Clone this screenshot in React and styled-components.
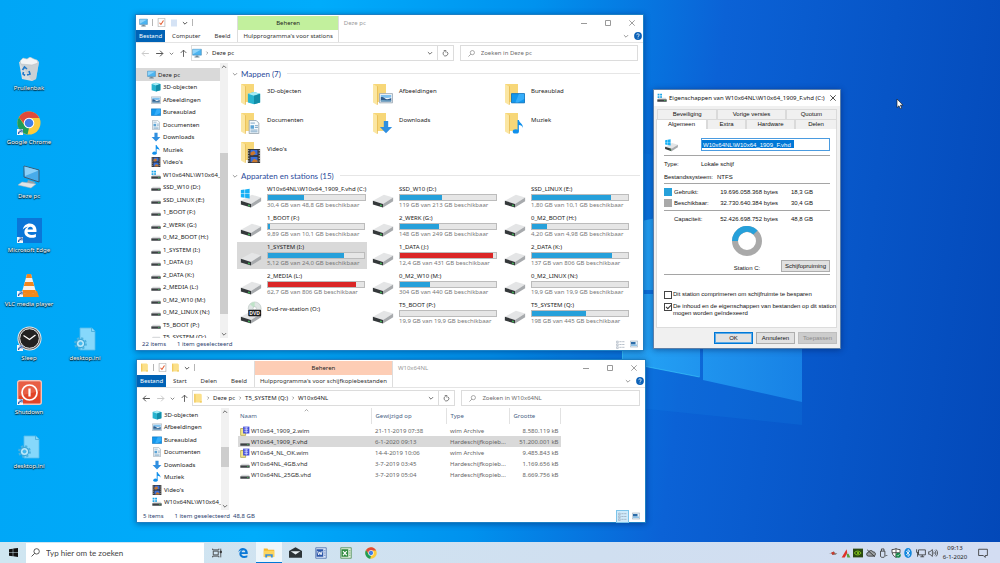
import React from "react";
import styled, { createGlobalStyle } from "styled-components";

const GlobalStyle = createGlobalStyle`
  * {
    box-sizing: border-box;
  }
  body {
    margin: 0;
    font-family: "Noto Sans", "Open Sans", sans-serif;
    font-size: 6px;
    line-height: 8px;
    color: #222;
  }
  button, input {
    font: inherit;
    color: inherit;
    margin: 0;
    padding: 0;
    border: 0;
    background: none;
    border-radius: 0;
  }
  a {
    color: inherit;
    text-decoration: none;
  }
  ul {
    list-style: none;
    margin: 0;
    padding: 0;
  }
  svg {
    display: block;
    flex: none;
  }
`;

/* ---------- icons ---------- */

const Icon = ({ w = 10, h, box = "0 0 16 16", children }) => (
  <svg width={w} height={h || w} viewBox={box} aria-hidden="true">
    {children}
  </svg>
);

const PcIcon = ({ w = 10 }) => (
  <Icon w={w}>
    <path d="M1 2h14v9.500H1z" fill="#4db4f0" stroke="#3b7ca8" strokeWidth=".8" />
    <path d="M1.500 2.500h13L1.500 10z" fill="#8fd4fa" />
    <path d="M6 12h4v1.500h2V15H4v-1.500h2z" fill="#6f8796" />
  </Icon>
);

const CubeIcon = ({ w = 10 }) => (
  <Icon w={w}>
    <path d="M8 1l7 2v10l-7 2-7-2V3z" fill="#28b4cf" />
    <path d="M8 1l7 2-7 2.500L1 3z" fill="#a6ecf5" />
    <path d="M8 5.500L15 3v10l-7 2z" fill="#128da8" />
  </Icon>
);

const PictureIcon = ({ w = 10 }) => (
  <Icon w={w}>
    <path d="M.5 3h15v10.500H.5z" fill="#f4f6f8" stroke="#9aa7b2" />
    <path d="M2 4.500h12v3L9 8 2 7z" fill="#7fc0ee" />
    <path d="M2 7c3-1 4 1 6 2s4 0 6-1v4H2z" fill="#2f5c8c" />
    <path d="M2 10.500c4-.5 8 .5 12 0V12H2z" fill="#6ea3c4" />
  </Icon>
);

const DesktopIcon = ({ w = 10 }) => (
  <Icon w={w}>
    <path d="M.5 3h15v10.500H.5z" fill="#1298ee" stroke="#0c70bb" />
    <path d="M9 3.500h6V9l-7 4H5z" fill="#36aefa" />
  </Icon>
);

const DocIcon = ({ w = 10 }) => (
  <Icon w={w}>
    <path d="M2.500.5h8l3 3v12h-11z" fill="#f7fafc" stroke="#97a5b0" />
    <path d="M4 6h4v4H4z" fill="#5ba3d4" />
    <path d="M9 6.500h3.500M9 8.500h3.500M4 11.500h8M4 13.500h8M4 3.500h5" stroke="#6f9dc0" />
  </Icon>
);

const DownIcon = ({ w = 10 }) => (
  <Icon w={w}>
    <path d="M5.500 1h5v7H15l-7 7-7-7h4.500z" fill="#2f8fe0" />
  </Icon>
);

const MusicIcon = ({ w = 10 }) => (
  <Icon w={w}>
    <ellipse cx="5.500" cy="13" rx="3.500" ry="2.500" fill="#1090ec" />
    <path d="M7.500 0H9c.5 3.500 5 4 4.500 9-.5-2-2-3-4.500-3.200V13H7.500z" fill="#1090ec" />
  </Icon>
);

const VideoIcon = ({ w = 10 }) => (
  <Icon w={w}>
    <path d="M1 0h14v16H1z" fill="#333" />
    <path d="M4 1h8v6H4z" fill="#3a6fd8" />
    <path d="M4 9h8v6H4z" fill="#3a6fd8" />
    <path d="M4 4l4-2 2 3-3 2H4zM5 15l3-4 4 2v2z" fill="#c9772c" />
    <path d="M2 1v14M14 1v14" stroke="#ddd" strokeDasharray="1.500 1.500" />
  </Icon>
);

const MiniDriveIcon = ({ win }) => (
  <Icon w={10}>
    {win && <path d="M1 1h3v3H1zM5 1h3v3H5zM1 5h3v3H1zM5 5h3v3H5z" fill="#19a5ea" />}
    <path d="M3 7.500h11l1.500 3H.5z" fill="#d9dbdd" />
    <path d="M.5 10.200h15V14H.5z" fill="#3d4144" />
    <path d="M11.500 11.500h2v1.200h-2z" fill="#45d562" />
  </Icon>
);

const DriveShape = () => (
  <>
    <path d="M1 17l12-6.500 10 3L12 20.500z" fill="#e4e5e6" />
    <path d="M1 17l11 3.500v4L1 21z" fill="#34383a" />
    <path d="M12 20.500l11-7v4.200l-11 6.800z" fill="#a7aaad" />
    <path d="M9 21.200l1.600.5v1.500L9 22.700z" fill="#46d35f" />
  </>
);

const WinFlag = () => (
  <path
    d="M1 1.500l4-.6v4.200H1zM5.600.800L10.500 0v5.100H5.600zM1 5.700h4v4.100l-4-.6zM5.600 5.700h4.900v5l-4.900-.8z"
    fill="#16b0f5"
  />
);

const DriveIcon = ({ kind, w = 24 }) => (
  <Icon w={w} box="0 0 24 26">
    <DriveShape />
    {kind === "win" && <g transform="translate(0 4)"><WinFlag /></g>}
    {kind === "dvd" && (
      <>
        <circle cx="16" cy="8" r="7" fill="#dfe5e4" stroke="#b6c2bd" strokeWidth=".6" />
        <path d="M16 8L11 3.500a7 7 0 0 1 5-2.300z" fill="#bfe3c8" />
        <circle cx="16" cy="8" r="1.800" fill="#fff" stroke="#a8b3b0" strokeWidth=".5" />
        <rect x="9" y="9.500" width="14" height="7" rx="1" fill="#191b1c" />
        <text x="16" y="15" fontSize="5.500" fontWeight="700" fill="#eee" textAnchor="middle">DVD</text>
      </>
    )}
  </Icon>
);

const FolderBack = () => (
  <>
    <path d="M1 1h13v18H4z" fill="#f7d778" />
    <path d="M1 1l4 2.500V22l-4-2.500z" fill="#fbe6a2" />
    <path d="M5 3.500l.8-.5v18.500L5 22z" fill="#e7bd55" />
  </>
);

const SmallFolder = ({ w = 9 }) => (
  <Icon w={w}>
    <path d="M2 1h10l2 1.500V15H2z" fill="#fbe08a" />
    <path d="M2 1l2 1.500V15H2zM11 13h3v2h-3z" fill="#f0c75a" />
  </Icon>
);

const SheetIcon = () => (
  <Icon w={9}>
    <path d="M2 .5h12v15H2z" fill="#fff" stroke="#9b9b9b" />
    <path d="M4.500 8.500l2.500 3 4.500-7" fill="none" stroke="#e2572b" strokeWidth="1.800" />
  </Icon>
);

const ArchiveIcon = () => (
  <Icon w={10}>
    <path d="M1 4h8v11H1z" fill="#f3e78f" stroke="#a08d2c" />
    <path d="M5 1h10v11H5z" fill="#3e49d8" />
    <path d="M7 3h6M7 6h6M7 9h6M10 2v9" stroke="#dfe2ff" strokeWidth="1.200" />
  </Icon>
);

const Chevron = ({ dir = "down", color = "#555", w = 6 }) => {
  const turn = { down: 0, up: 180, right: -90, left: 90 }[dir];
  return (
    <Icon w={w} box="0 0 10 10">
      <path
        d="M1.500 3.500L5 7l3.500-3.500"
        fill="none"
        stroke={color}
        strokeWidth="1.400"
        transform={`rotate(${turn} 5 5)`}
      />
    </Icon>
  );
};

const Arrow = ({ turn = 0, color = "#555" }) => (
  <Icon w={9}>
    <g transform={`rotate(${turn} 8 8)`} fill="none" stroke={color} strokeWidth="1.600">
      <path d="M2 8h12M7 3L2 8l5 5" />
    </g>
  </Icon>
);

const SearchIcon = ({ w = 7, color = "#777" }) => (
  <Icon w={w}>
    <circle cx="10" cy="6" r="4.800" fill="none" stroke={color} strokeWidth="1.400" />
    <path d="M6.500 9.500L1 15" stroke={color} strokeWidth="1.500" />
  </Icon>
);

const RefreshIcon = () => (
  <Icon w={7}>
    <path d="M12 4.500A5.500 5.500 0 1 1 6 3" fill="none" stroke="#555" strokeWidth="1.700" />
    <path d="M4 1h5v5" fill="none" stroke="#555" strokeWidth="1.700" />
  </Icon>
);

const HelpIcon = () => (
  <Icon w={8}>
    <circle cx="8" cy="8" r="7.800" fill="#0c62b8" />
    <path d="M5.500 6.200C5.500 2.800 10.500 3 10.500 6c0 1.800-2.500 2-2.500 3.800M8 11.300v1.700" fill="none" stroke="#fff" strokeWidth="1.600" />
  </Icon>
);

const MinIcon = () => <Icon w={6} box="0 0 6 6"><path d="M0 3.500h6" stroke="#999" /></Icon>;
const MaxIcon = () => <Icon w={6} box="0 0 6 6"><path d="M.5.500h5v5h-5z" fill="none" stroke="#999" /></Icon>;
const CloseIcon = ({ color = "#888" }) => (
  <Icon w={6} box="0 0 6 6"><path d="M.3.300l5.400 5.400M5.700.300L.3 5.700" stroke={color} strokeWidth=".8" /></Icon>
);

const ListViewIcon = () => (
  <Icon w={9}>
    <path d="M1 2h3v3H1zM1 7h3v3H1zM1 12h3v3H1z" fill="none" stroke="#96a2b2" />
    <path d="M6 3h4M11 3h4M6 8h4M11 8h4M6 13h4M11 13h4" stroke="#8390a2" />
  </Icon>
);

const TileViewIcon = () => (
  <Icon w={8}>
    <path d="M.5 2h15v12H.5z" fill="#e8f1f8" stroke="#8a99a8" />
    <path d="M2 4h9v5H2z" fill="#2d6ca8" />
    <path d="M2 9h12v3H2z" fill="#8fc3e8" />
  </Icon>
);

const ChromeIcon = ({ w = 24 }) => (
  <Icon w={w} box="0 0 24 24">
    <circle cx="12" cy="12" r="11.500" fill="#fccb3b" />
    <path d="M2 6.200L7.500 14.500 12 17l-1.500 6.400A11.500 11.500 0 0 1 2 6.200z" fill="#1f9d58" />
    <path d="M2 6.200L8 14l4-7h10.300A11.500 11.500 0 0 0 2 6.200z" fill="#df4b3b" />
    <circle cx="12" cy="12" r="5.300" fill="#fff" />
    <circle cx="12" cy="12" r="4.300" fill="#3f7ee8" />
  </Icon>
);

const EdgeGlyph = ({ color }) => (
  <path
    d="M2.500 10.500C3.500 5 7.500 2 12 2c6 0 9.500 4.300 9.500 9.500v2.300H9c.3 3 3 4.200 6 4.200 2.200 0 4-.5 5.700-1.500v4.200C19 21.600 16.800 22 14.500 22 8.500 22 4.700 18.500 4.700 14c0-3.300 1.800-6 5-7.400-3 .3-5.500 1.700-7.200 3.900zM9.200 10.300h7.300c0-2.300-1.200-3.700-3.500-3.700-2 0-3.400 1.400-3.800 3.700z"
    fill={color}
  />
);

const EdgeTile = () => (
  <Icon w={25} box="0 0 25 25">
    <path d="M0 0h25v25H0z" fill="#0a76d8" />
    <g transform="translate(4 4) scale(.72)"><EdgeGlyph color="#fff" /></g>
  </Icon>
);

const BinIcon = () => (
  <Icon w={22} h={24} box="0 0 22 24">
    <path d="M1 5l18-2 2 2-3 17-4 2-10-2z" fill="#d8dde0" />
    <path d="M1 5l13 2 7-2-3 17-4 2z" fill="#c3cacf" opacity=".7" />
    <path d="M2 4l3-3 4 1 3-2 4 2 3 1 1 3-6 2L3 7z" fill="#f2f4f5" stroke="#b7bec2" strokeWidth=".5" />
    <path d="M4.500 13l2-3 2.500 2M11 14l1 3-3 1M7 18.500l-2-1.500.5-2" fill="none" stroke="#2078c8" strokeWidth="1.600" />
  </Icon>
);

const DesktopPcIcon = () => (
  <Icon w={24} box="0 0 24 24">
    <path d="M7 1l15 4v12L7 12z" fill="#48abea" stroke="#3b5b73" />
    <path d="M7.500 1.500l14 4L8 11z" fill="#8bd0f8" />
    <path d="M11 15l7 2-1 2-7-1z" fill="#90a0aa" />
    <path d="M5 17l14 2-5 4-13-3z" fill="#e0e4e6" stroke="#a8b1b6" strokeWidth=".5" />
  </Icon>
);

const VlcIcon = () => (
  <Icon w={24} box="0 0 24 24">
    <path d="M4 18h16l2 6H2z" fill="#f08a1c" />
    <path d="M10 1h4l5 18c-2 2.500-12 2.500-14 0z" fill="#f5f0ea" />
    <path d="M10 1h4l1 4H9zM8 9h8l1.200 4H6.800zM5.500 17h13l.5 2.500c-2 2-12 2-14 0z" fill="#f3861a" />
  </Icon>
);

const SleepIcon = () => (
  <Icon w={25} box="0 0 25 25">
    <circle cx="12.500" cy="12.500" r="12" fill="#e9e9e9" />
    <circle cx="12.500" cy="12.500" r="11" fill="#555" />
    <circle cx="12.500" cy="12.500" r="9.800" fill="#222" stroke="#f3f3f3" />
    <path d="M6.500 9.500l6 4 6-4.500" fill="none" stroke="#fff" strokeWidth="1.300" />
  </Icon>
);

const ShutdownIcon = () => (
  <Icon w={25} box="0 0 25 25">
    <rect x=".7" y=".7" width="23.600" height="23.600" rx="2" fill="#e24428" stroke="#f4c5bb" strokeWidth="1.400" />
    <path d="M2 2h21v9L2 16z" fill="#ec7258" opacity=".6" />
    <circle cx="12.500" cy="12.500" r="7.500" fill="none" stroke="#fff" strokeWidth="1.700" />
    <path d="M12.500 8.500v8" stroke="#fff" strokeWidth="2.200" />
  </Icon>
);

const IniIcon = () => (
  <Icon w={24} box="0 0 24 24">
    <path d="M7 1h12l3 3v19H7z" fill="#86d8fb" stroke="#55bdec" strokeWidth=".8" />
    <path d="M18.500 1v3.500H22" fill="none" stroke="#42a9d8" strokeWidth=".8" />
    <circle cx="7.500" cy="16.500" r="4.200" fill="#b9e8fb" stroke="#3da7d8" strokeWidth="1.200" />
    <circle cx="7.500" cy="16.500" r="5.500" fill="none" stroke="#4cb2df" strokeWidth="1.800" strokeDasharray="2.200 2.120" />
    <circle cx="7.500" cy="16.500" r="1.600" fill="#3ebaf4" stroke="#3da7d8" strokeWidth=".6" />
  </Icon>
);

const StartIcon = () => (
  <Icon w={9} box="0 0 18 18">
    <path d="M0 2.500L7.500 1.400v7.100H0zM8.500 1.200L18 0v8.500H8.500zM0 9.500h7.500v7.100L0 15.500zM8.500 9.500H18V18l-9.500-1.300z" fill="#111" />
  </Icon>
);

const TaskViewIcon = () => (
  <Icon w={10}>
    <path d="M2 5h8v6H2zM1 1v2h10V1M1 15v-2h10v2" fill="none" stroke="#333" strokeWidth="1.300" />
    <path d="M14 1v14M12.800 5h2.400v2.500h-2.400z" stroke="#333" strokeWidth="1.200" fill="#333" />
  </Icon>
);

const ExplorerIcon = () => (
  <Icon w={12}>
    <path d="M1 2h5l1 1.500h8V13H1z" fill="#f5b92e" />
    <path d="M1 5h14v8.500H1z" fill="#fcd560" />
    <path d="M3 14V9.500h10V14h-2.500v-2.500h-5V14z" fill="#3d8fdb" />
  </Icon>
);

const MailIcon = () => (
  <Icon w={13}>
    <path d="M0 6l8-4.500L16 6v8.500H0z" fill="#2c3438" />
    <path d="M2 6.500h12l-6 4z" fill="#e8f0f4" />
  </Icon>
);

const WordIcon = () => (
  <Icon w={12}>
    <path d="M1 1h14v14H1z" fill="#dbe6f8" stroke="#4465a8" />
    <path d="M2 3h9v10H2z" fill="#2c57a8" />
    <path d="M3.500 5.500l1.400 5 1.600-4 1.600 4 1.400-5" fill="none" stroke="#fff" strokeWidth="1.200" />
    <path d="M12 5h2M12 8h2M12 11h2" stroke="#5474b5" />
  </Icon>
);

const ExcelIcon = () => (
  <Icon w={12}>
    <path d="M1 1h14v14H1z" fill="#e2f0df" stroke="#45864a" />
    <path d="M2 3h9v10H2z" fill="#2f8a3d" />
    <path d="M4 5.500l5 5.500M9 5.500L4 11" stroke="#fff" strokeWidth="1.500" />
    <path d="M12 5h2M12 8h2M12 11h2" stroke="#58a05e" />
  </Icon>
);

const trayIcons = {
  "Rode melding": (
    <>
      <path d="M1 8h5l3-3 3 3h3l-3 3H8L6 9z" fill="#8d8a88" />
      <path d="M5 7l4-1 2 3-4 2z" fill="#c63a2e" />
    </>
  ),
  Monitor: (
    <>
      <path d="M1 15L9 2l1 6-4 7z" fill="#e03228" />
      <path d="M9 9h3l3 6h-5z" fill="#5aa03c" />
    </>
  ),
  NVIDIA: (
    <>
      <path d="M0 1h16v14H0z" fill="#2b4a12" />
      <path d="M2 8c3-4 8-4 11 0-3 4-8 4-11 0z" fill="none" stroke="#8cd41f" strokeWidth="1.500" />
      <circle cx="8" cy="8" r="1.700" fill="#8cd41f" />
    </>
  ),
  OneDrive: (
    <>
      <path d="M4 13a3 3 0 0 1 0-6c.5-3.500 6-4 7.200-.7 3-.3 4.300 2 3.800 4-.3 1.800-1.500 2.700-3 2.700z" fill="#9ba0a4" stroke="#333" strokeWidth="1.300" />
      <path d="M2 3l12 11" stroke="#333" strokeWidth="1.500" />
    </>
  ),
  Usb: (
    <>
      <path d="M4 5h7v8.500c0 2-7 2-7 0zM5.500 5V1.500h4V5" fill="none" stroke="#333" strokeWidth="1.300" />
      <path d="M12 12h3" stroke="#333" />
    </>
  ),
  Beveiliging: (
    <>
      <path d="M8 1c2 1.200 4 1.500 6.500 1.500C15 9 12.500 13 8 15 3.500 13 1 9 1.500 2.500 4 2.500 6 2.200 8 1zM8 1v14M2 7.500h12" fill="#fff" stroke="#333" strokeWidth="1.300" />
      <circle cx="11.500" cy="11.500" r="4" fill="#16884a" />
      <path d="M9.500 11.500l1.500 1.500 2.500-3" fill="none" stroke="#fff" />
    </>
  ),
  Bluetooth: (
    <>
      <ellipse cx="8" cy="8" rx="6" ry="8" fill="#1186dd" />
      <path d="M5 5l6 6-3 2.500v-11L11 5l-6 6" fill="none" stroke="#fff" strokeWidth="1.200" />
    </>
  ),
  Netwerk: <path d="M4 3h11v8H4zM7 14h6M10 11v3M1 2v5h3M2.500 7v7" fill="none" stroke="#333" strokeWidth="1.300" />,
  Volume: (
    <path d="M1 6h2l4-3.500v11L3 10H1zM9 6c1 1 1 3 0 4M11 4c2 2 2 6 0 8M13 2.500c3 3 3 8 0 11" fill="none" stroke="#333" strokeWidth="1.200" />
  ),
};

/* ---------- desktop ---------- */

const Desktop = styled.div`
  position: relative;
  display: flex;
  flex-direction: column;
  min-height: 100vh;
  overflow: hidden;
  background: linear-gradient(97deg, #00a6f6 0%, #00acfb 30%, #0092ee 50%, #0b62d6 68%, #0348b8 100%);
`;

const Wallpaper = styled.svg`
  position: absolute;
  inset: 0;
  width: 100%;
  height: 100%;
`;

const DesktopArea = styled.main`
  flex: 1;
  display: flex;
  padding: 56px 1px 0;
`;

const ShortcutColumn = styled.div`
  display: flex;
  flex-direction: column;
  padding-top: ${(p) => (p.$low ? "270px" : "0")};
  width: 56px;
`;

const Shortcut = styled.button`
  position: relative;
  display: flex;
  flex-direction: column;
  align-items: center;
  gap: 3px;
  height: 54px;
  color: #fff;
  text-shadow: 0 1px 1px #000, 0 0 2px #000;
  white-space: nowrap;
`;

const ShortcutArt = styled.span`
  display: flex;
  align-items: center;
  justify-content: center;
  position: relative;
  width: 25px;
  height: 25px;
`;

const LinkBadge = styled.span`
  position: absolute;
  left: 0;
  bottom: 0;
  width: 6px;
  height: 6px;
  background: #f2f6fa;
`;

/* ---------- explorer window ---------- */

const Window = styled.section`
  position: absolute;
  left: ${(p) => p.$left};
  top: ${(p) => p.$top}px;
  width: ${(p) => p.$width};
  display: flex;
  flex-direction: column;
  background: #fff;
  border: 1px solid #1c7fc4;
  box-shadow: 0 1px 6px rgba(0, 20, 70, 0.45);
`;

const RibbonHead = styled.header`
  display: flex;
  height: 28px;
  border-bottom: 1px solid #e4e4e4;
`;

const RibbonLeft = styled.div`
  display: flex;
  flex-direction: column;
`;

const QuickAccess = styled.div`
  display: flex;
  align-items: center;
  gap: 4px;
  height: 16px;
  padding-left: 3px;
`;

const Divider = styled.span`
  width: 1px;
  height: 7px;
  background: #b5b5b5;
`;

const TabRow = styled.div`
  display: flex;
  height: 12px;
`;

const RibbonTab = styled.button`
  padding: 0 ${(p) => p.$pad || 7}px;
  line-height: 12px;
  white-space: nowrap;
  color: ${(p) => (p.$file ? "#fff" : "#333")};
  background: ${(p) => (p.$file ? "#0062b5" : "transparent")};
`;

const ContextTab = styled.div`
  display: flex;
  flex-direction: column;
  margin-top: 1px;
  text-align: center;
  border: solid #ddd;
  border-width: 0 1px;

  span {
    height: 14px;
    line-height: 15px;
    background: ${(p) => p.$color};
  }
`;

const WindowTitle = styled.h1`
  flex: 1;
  margin: 0;
  padding-left: 5px;
  font-size: 6px;
  font-weight: 400;
  line-height: 16px;
  color: #999;
`;

const WindowButtons = styled.div`
  display: flex;
  flex-direction: column;
  align-items: flex-end;
  padding-right: 1px;
`;

const ButtonRow = styled.div`
  display: flex;
  align-items: center;
  gap: ${(p) => p.$gap}px;
  height: ${(p) => p.$height}px;
  padding-right: ${(p) => p.$right || 0}px;
`;

const IconButton = styled.button`
  display: flex;
  align-items: center;
  justify-content: center;
`;

const AddressRow = styled.div`
  display: flex;
  align-items: center;
  gap: 6px;
  padding: 2px 5px 2px 4px;
`;

const NavButtons = styled.div`
  display: flex;
  align-items: center;
  gap: 5px;
  width: 45px;
  padding-left: 1px;
`;

const AddressBox = styled.div`
  flex: 1 1 264px;
  display: flex;
  align-items: center;
  height: 16px;
  border: 1px solid #dcdcdc;
`;

const Crumbs = styled.nav`
  flex: 1;
  display: flex;
  align-items: center;
  gap: 3px;
  white-space: nowrap;
`;

const RefreshButton = styled(IconButton)`
  width: 16px;
  height: 14px;
  margin-left: 4px;
  border-left: 1px solid #dcdcdc;
`;

const SearchBox = styled.label`
  flex: 1 1 179px;
  display: flex;
  align-items: center;
  gap: 6px;
  height: 16px;
  padding-left: 7px;
  border: 1px solid #dcdcdc;

  input {
    flex: 1;
    min-width: 0;
    outline: none;
  }
  input::placeholder {
    color: #6b6b6b;
    opacity: 1;
  }
`;

const Body = styled.div`
  display: flex;
  height: ${(p) => p.$height}px;
`;

const Tree = styled.ul`
  width: 84px;
  overflow: hidden;
  padding-top: ${(p) => p.$top || 0}px;
`;

const TreeItem = styled.li`
  height: 13px;
  background: ${(p) => (p.$root ? "#d9d9d9" : "transparent")};

  &:nth-child(even) {
    height: 12px;
  }
  a {
    display: flex;
    align-items: center;
    gap: 2px;
    height: 100%;
    padding-left: ${(p) => (p.$root ? 11 : 15)}px;
    white-space: nowrap;
  }
`;

const ScrollTrack = styled.div`
  display: flex;
  flex-direction: column;
  align-items: center;
  width: 8px;
  padding: 1px 0;
  background: #f1f1f1;
`;

const ScrollSpace = styled.span`
  flex: ${(p) => p.$grow};
`;

const ScrollThumb = styled.span`
  flex: ${(p) => p.$grow};
  width: 100%;
  background: #cdcdcd;
`;

const Content = styled.div`
  flex: 1;
  min-width: 0;
  padding: ${(p) => p.$top || 0}px 3px 0 4px;
`;

const GroupTitle = styled.h2`
  display: flex;
  align-items: center;
  gap: 3px;
  margin: 0;
  height: 17px;
  font-family: Lato, "Noto Sans", sans-serif;
  font-size: 8px;
  font-weight: 400;
  color: #2b4b9b;
  white-space: nowrap;

  &::after {
    content: "";
    flex: 1;
    height: 1px;
    margin-left: 3px;
    background: #e6e6e6;
  }
`;

const TileGrid = styled.div`
  display: grid;
  grid-template-columns: repeat(3, 130px);
  grid-auto-rows: 27px;
  gap: 2px;
  padding-left: 5px;
`;

const Tile = styled.button`
  display: flex;
  gap: 4px;
  padding: 1px 2px;
  text-align: left;
  white-space: nowrap;
  background: ${(p) => (p.$selected ? "#d9d9d9" : "transparent")};
`;

const TileArt = styled.span`
  position: relative;
  display: flex;
  width: 24px;
`;

const TileOverlay = styled.span`
  position: absolute;
  left: 8px;
  top: 8px;
`;

const TileText = styled.span`
  flex: 1;
  display: flex;
  flex-direction: column;
  padding-top: ${(p) => (p.$low ? 4 : 0)}px;
`;

const Meter = styled.span`
  display: block;
  height: 7px;
  margin-top: 1px;
  border: 1px solid #bcbcbc;
  background: #e6e6e6;

  i {
    display: block;
    height: 100%;
    background: ${(p) => (p.$full ? "#da2626" : "#26a0da")};
  }
`;

const Muted = styled.span`
  color: #777;
`;

const StatusBar = styled.footer`
  display: flex;
  align-items: center;
  gap: 11px;
  height: 12px;
  padding: 0 3px 0 6px;
  color: #2b4270;
`;

const ViewButtons = styled.div`
  display: flex;
  align-items: center;
  margin-left: auto;
  gap: 1px;

  button {
    padding: 1px;
    border: 1px solid transparent;
  }
  button[aria-pressed="true"] {
    background: #cfeafa;
    border-color: #7cc4ea;
  }
`;

const FileTable = styled.table`
  border-collapse: collapse;
  table-layout: fixed;
  width: 323px;
  margin-left: 5px;

  th {
    position: relative;
    height: 16px;
    padding: 0 0 0 4px;
    font-weight: 400;
    text-align: left;
    color: #4a5f85;
    border-right: 1px solid #e2e2e2;
  }
  td {
    height: 11px;
    padding: 0 0 0 4px;
    color: #666;
    white-space: nowrap;
  }
  th:first-child,
  td:first-child {
    padding-left: 2px;
  }
  td:first-child {
    color: #333;
  }
  td:last-child {
    text-align: right;
    padding-right: 2px;
  }
  tbody::before {
    content: "";
    display: block;
    height: 1px;
  }
`;

const SortMark = styled.span`
  position: absolute;
  left: 50%;
  top: 0;
`;

const FileRow = styled.tr`
  background: ${(p) => (p.$selected ? "#d9d9d9" : "transparent")};
`;

const FileName = styled.span`
  display: flex;
  align-items: center;
  gap: 1px;
`;

/* ---------- properties dialog ---------- */

const Dialog = styled(Window)`
  background: #f0f0f0;
  border-color: #5d7fa8;
  padding: 0 3px 4px 2px;
  font-family: "Liberation Sans", Arial, sans-serif;
  color: #111;
`;

const DialogTitle = styled.header`
  display: flex;
  align-items: center;
  gap: 2px;
  height: 16px;
  margin: 0 -3px 0 -2px;
  padding: 0 4px 0 3px;
  background: #fff;

  h1 {
    flex: 1;
    margin: 0;
    font-family: "Noto Sans", "Open Sans", sans-serif;
    font-size: 6px;
    font-weight: 400;
    white-space: nowrap;
  }
`;

const TabStrip = styled.div`
  display: grid;
  grid-template-columns: ${(p) => p.$columns};
  margin-top: ${(p) => p.$top || 0}px;
  padding-left: ${(p) => p.$inset || 0}px;
`;

const DialogTab = styled.button`
  height: 10px;
  line-height: 9px;
  background: ${(p) => (p.$active ? "#fff" : "#f0f0f0")};
  border: 1px solid #dadada;
  border-bottom: 0;
`;

const Sheet = styled.div`
  display: flex;
  flex-direction: column;
  padding: 8px 6px 10px 7px;
  background: #fff;
  border: 1px solid #dcdcdc;
  border-top: 0;
`;

const NameRow = styled.div`
  display: flex;
  align-items: center;
  gap: 22px;
  padding-bottom: 3px;

  input {
    flex: 1;
    min-width: 0;
    height: 13px;
    padding: 0 1px;
    border: 1px solid #4a9be0;
    outline: none;
    background: linear-gradient(#0078d7, #0078d7) no-repeat 0 1px / 92px 8px;
    color: #fff;
  }
`;

const Rule = styled.hr`
  width: 100%;
  height: 1px;
  margin: 0;
  border: 0;
  background: #a5a5a5;
`;

const Facts = styled.dl`
  display: grid;
  grid-template-columns: ${(p) => p.$columns};
  grid-auto-rows: ${(p) => p.$row}px;
  align-items: center;
  margin: 0;
  padding: ${(p) => p.$pad || "1px 0 0"};

  dd, dt {
    margin: 0;
    white-space: nowrap;
  }
  dd.bytes {
    text-align: right;
    padding-right: 13px;
  }
`;

const Swatch = styled.span`
  width: 8px;
  height: 8px;
  background: ${(p) => p.$color};
`;

const ChartRow = styled.div`
  display: grid;
  grid-template-columns: 1fr auto 1fr;
  align-items: end;
  padding-bottom: 2px;
`;

const Chart = styled.div`
  display: flex;
  flex-direction: column;
  align-items: center;
  gap: 8px;
`;

const PushButton = styled.button`
  justify-self: end;
  height: 12px;
  min-width: 39px;
  padding: 0 3px;
  line-height: 9px;
  white-space: nowrap;
  background: #e1e1e1;
  border: 1px solid ${(p) => (p.$primary ? "#0078d7" : "#adadad")};
  box-shadow: ${(p) => (p.$primary ? "inset 0 0 0 1px #5aa9e6" : "none")};

  &:disabled {
    background: #ccc;
    border-color: #bfbfbf;
    color: #8b8b8b;
  }
`;

const Options = styled.div`
  padding-top: 12px;
`;

const CheckRow = styled.label`
  display: flex;
  align-items: flex-start;
  gap: 1px;
  padding-top: 4px;
  line-height: 7px;
  white-space: nowrap;

  input {
    display: flex;
    justify-content: center;
    appearance: none;
    width: 8px;
    height: 8px;
    border: 1px solid #444;
    background: #fff;
    flex: none;
  }
  input:checked::before {
    content: "";
    width: 2px;
    height: 4px;
    border: solid #333;
    border-width: 0 1px 1px 0;
    transform: rotate(45deg);
  }
`;

const DialogButtons = styled.div`
  display: flex;
  justify-content: flex-end;
  gap: 3px;
  padding-top: 4px;
`;

/* ---------- taskbar ---------- */

const Taskbar = styled.footer`
  position: relative;
  display: flex;
  align-items: center;
  flex: none;
  height: 21px;
  background: linear-gradient(90deg, #cfe6f1, #d0dff0 60%, #d3ddf2);
`;

const TaskSearch = styled.label`
  display: flex;
  align-items: center;
  gap: 6px;
  width: 178px;
  height: 20px;
  padding-left: 5px;
  background: #fff;

  input {
    flex: 1;
    min-width: 0;
    font-family: Lato, "Noto Sans", sans-serif;
    font-size: 8px;
    outline: none;
  }
  input::placeholder {
    color: #444;
    opacity: 1;
  }
`;

const TaskButton = styled.button`
  display: flex;
  align-items: center;
  justify-content: center;
  width: ${(p) => p.$width || 26}px;
  height: 21px;
  background: ${(p) => (p.$active ? "#eef6fb" : "transparent")};
  box-shadow: ${(p) => (p.$active ? "inset 0 -1px #0078d7" : "none")};
`;

const Tray = styled.div`
  display: flex;
  align-items: center;
  gap: 3px;
  margin-left: auto;
  padding-right: 6px;
`;

const TrayIcons = styled.div`
  display: flex;
  justify-content: space-between;
  width: 110px;
`;

const Clock = styled.time`
  width: 28px;
  line-height: 9px;
  text-align: center;
`;

/* ---------- data ---------- */

const places = [
  ["3D-objecten", CubeIcon],
  ["Afbeeldingen", PictureIcon],
  ["Bureaublad", DesktopIcon],
  ["Documenten", DocIcon],
  ["Downloads", DownIcon],
  ["Muziek", MusicIcon],
  ["Video's", VideoIcon],
];

const treeDrives = [
  "SSD_W10 (D:)",
  "SSD_LINUX (E:)",
  "1_BOOT (F:)",
  "2_WERK (G:)",
  "0_M2_BOOT (H:)",
  "1_SYSTEM (I:)",
  "1_DATA (J:)",
  "2_DATA (K:)",
  "2_MEDIA (L:)",
  "0_M2_W10 (M:)",
  "0_M2_LINUX (N:)",
  "T5_BOOT (P:)",
  "T5_SYSTEM (Q:)",
];

const drives = [
  { name: "W10x64NL\\W10x64_1909_F.vhd (C:)", free: "30,4 GB van 48,8 GB beschikbaar", used: 37, kind: "win" },
  { name: "SSD_W10 (D:)", free: "119 GB van 213 GB beschikbaar", used: 44 },
  { name: "SSD_LINUX (E:)", free: "1,80 GB van 10,1 GB beschikbaar", used: 82 },
  { name: "1_BOOT (F:)", free: "9,89 GB van 10,1 GB beschikbaar", used: 2 },
  { name: "2_WERK (G:)", free: "148 GB van 249 GB beschikbaar", used: 41 },
  { name: "0_M2_BOOT (H:)", free: "4,20 GB van 4,98 GB beschikbaar", used: 16 },
  { name: "1_SYSTEM (I:)", free: "5,12 GB van 24,0 GB beschikbaar", used: 79, selected: true },
  { name: "1_DATA (J:)", free: "12,4 GB van 431 GB beschikbaar", used: 97, full: true },
  { name: "2_DATA (K:)", free: "137 GB van 806 GB beschikbaar", used: 83 },
  { name: "2_MEDIA (L:)", free: "62,7 GB van 806 GB beschikbaar", used: 92, full: true },
  { name: "0_M2_W10 (M:)", free: "304 GB van 440 GB beschikbaar", used: 31 },
  { name: "0_M2_LINUX (N:)", free: "19,9 GB van 19,9 GB beschikbaar", used: 0 },
  { name: "Dvd-rw-station (O:)", kind: "dvd" },
  { name: "T5_BOOT (P:)", free: "19,9 GB van 19,9 GB beschikbaar", used: 0 },
  { name: "T5_SYSTEM (Q:)", free: "198 GB van 445 GB beschikbaar", used: 56 },
];

const files = [
  ["W10x64_1909_2.wim", "21-11-2019 07:38", "wim Archive", "8.580.119 kB"],
  ["W10x64_1909_F.vhd", "6-1-2020 09:13", "Hardeschijfkopieb...", "51.200.001 kB"],
  ["W10x64_NL_OK.wim", "14-4-2019 10:06", "wim Archive", "9.485.843 kB"],
  ["W10x64NL_4GB.vhd", "3-7-2019 03:45", "Hardeschijfkopieb...", "1.169.656 kB"],
  ["W10x64NL_25GB.vhd", "3-7-2019 05:04", "Hardeschijfkopieb...", "8.669.756 kB"],
];

const shortcuts = [
  ["Prullenbak", BinIcon, false],
  ["Google Chrome", ChromeIcon, true],
  ["Deze pc", DesktopPcIcon, false],
  ["Microsoft Edge", EdgeTile, true],
  ["VLC media player", VlcIcon, true],
  ["Sleep", SleepIcon, true],
  ["Shutdown", ShutdownIcon, true],
  ["desktop.ini", IniIcon, false],
];

/* ---------- parts ---------- */

const DesktopShortcut = ({ name, Art, linked }) => (
  <Shortcut type="button">
    <ShortcutArt>
      <Art />
      {linked && (
        <LinkBadge>
          <Icon w={6} box="0 0 6 6"><path d="M1.500 5c0-2 1-2.500 2.500-2.500M2.500 1h2.500v2.500" fill="none" stroke="#2a5caa" strokeWidth="1.200" /></Icon>
        </LinkBadge>
      )}
    </ShortcutArt>
    {name}
  </Shortcut>
);

const Ribbon = ({ icon, folder, tabs, context, color, title }) => (
  <RibbonHead>
    <RibbonLeft>
      <QuickAccess>
        {icon}
        <Divider />
        <SheetIcon />
        {folder}
        <Chevron w={6} color="#333" />
        <Divider />
      </QuickAccess>
      <TabRow>
        <RibbonTab type="button" $file $pad={3}>Bestand</RibbonTab>
        {tabs.map((t) => (
          <RibbonTab type="button" key={t}>{t}</RibbonTab>
        ))}
      </TabRow>
    </RibbonLeft>
    <ContextTab $color={color}>
      <span>Beheren</span>
      <RibbonTab type="button" $pad={5}>{context}</RibbonTab>
    </ContextTab>
    <WindowTitle>{title}</WindowTitle>
    <WindowButtons>
      <ButtonRow $gap={18} $height={15} $right={7}>
        <IconButton type="button" aria-label="Minimaliseren"><MinIcon /></IconButton>
        <IconButton type="button" aria-label="Maximaliseren"><MaxIcon /></IconButton>
        <IconButton type="button" aria-label="Sluiten"><CloseIcon /></IconButton>
      </ButtonRow>
      <ButtonRow $gap={5} $height={12}>
        <IconButton type="button" aria-label="Lint uitvouwen"><Chevron color="#888" /></IconButton>
        <IconButton type="button" aria-label="Help"><HelpIcon /></IconButton>
      </ButtonRow>
    </WindowButtons>
  </RibbonHead>
);

const AddressBar = ({ icon, crumbs, search, back, forward }) => (
  <AddressRow>
    <NavButtons>
      <IconButton type="button" aria-label="Vorige"><Arrow color={back ? "#444" : "#c4c4c4"} /></IconButton>
      <IconButton type="button" aria-label="Volgende"><Arrow turn={180} color={forward ? "#444" : "#c4c4c4"} /></IconButton>
      <IconButton type="button" aria-label="Recent"><Chevron w={5} /></IconButton>
      <IconButton type="button" aria-label="Omhoog"><Arrow turn={90} /></IconButton>
    </NavButtons>
    <AddressBox>
      <Crumbs aria-label="Locatie">
        {icon}
        {crumbs.map((c) => (
          <React.Fragment key={c}>
            <Chevron dir="right" w={4} />
            <a href="#crumb">{c}</a>
          </React.Fragment>
        ))}
      </Crumbs>
      <Chevron w={6} />
      <RefreshButton type="button" aria-label="Vernieuwen"><RefreshIcon /></RefreshButton>
    </AddressBox>
    <SearchBox>
      <SearchIcon />
      <input type="text" placeholder={search} aria-label={search} />
    </SearchBox>
  </AddressRow>
);

const TreeRow = ({ name, icon, root }) => (
  <TreeItem $root={root}>
    <a href="#item">
      {icon}
      {name}
    </a>
  </TreeItem>
);

const Places = () => (
  <>
    {places.map(([name, Art]) => (
      <TreeRow key={name} name={name} icon={<Art w={10} />} />
    ))}
    <TreeRow name="W10x64NL\W10x64_" icon={<MiniDriveIcon win />} />
  </>
);

const Scrollbar = ({ before, thumb, after }) => (
  <ScrollTrack>
    <Chevron dir="up" w={6} />
    <ScrollSpace $grow={before} />
    <ScrollThumb $grow={thumb} />
    <ScrollSpace $grow={after} />
    <Chevron w={6} />
  </ScrollTrack>
);

const DriveTile = ({ drive }) => (
  <Tile type="button" $selected={drive.selected}>
    <TileArt><DriveIcon kind={drive.kind} /></TileArt>
    <TileText $low={!drive.free}>
      {drive.name}
      {drive.free && (
        <>
          <Meter $full={drive.full}><i style={{ width: `${drive.used}%` }} /></Meter>
          <Muted>{drive.free}</Muted>
        </>
      )}
    </TileText>
  </Tile>
);

const Views = ({ details }) => (
  <ViewButtons>
    <button type="button" aria-label="Details" aria-pressed={!!details}><ListViewIcon /></button>
    <button type="button" aria-label="Grote pictogrammen"><TileViewIcon /></button>
  </ViewButtons>
);

const ThisPcWindow = () => (
  <Window $left="13.5%" $top={14} $width="50.9%">
    <Ribbon
      icon={<PcIcon w={9} />}
      folder={<Icon w={8}><path d="M2 1h12v14H2z" fill="#d5e3f5" /></Icon>}
      tabs={["Computer", "Beeld"]}
      context="Hulpprogramma's voor stations"
      color="#c2f09d"
      title="Deze pc"
    />
    <AddressBar icon={<PcIcon w={10} />} crumbs={["Deze pc"]} search="Zoeken in Deze pc" forward />
    <Body $height={275}>
      <Tree $top={5}>
        <TreeRow name="Deze pc" icon={<PcIcon w={9} />} root />
        <Places />
        {treeDrives.map((d) => (
          <TreeRow key={d} name={d} icon={<MiniDriveIcon />} />
        ))}
      </Tree>
      <Scrollbar before={82} thumb={159} after={17} />
      <Content $top={2}>
        <GroupTitle><Chevron color="#888" />Mappen (7)</GroupTitle>
        <TileGrid>
          {places.map(([name, Art]) => (
            <Tile type="button" key={name}>
              <TileArt>
                <Icon w={22} h={23} box="-1 0 22 23"><FolderBack /></Icon>
                <TileOverlay><Art w={14} /></TileOverlay>
              </TileArt>
              <TileText $low>{name}</TileText>
            </Tile>
          ))}
        </TileGrid>
        <GroupTitle><Chevron color="#888" />Apparaten en stations (15)</GroupTitle>
        <TileGrid>
          {drives.map((d) => <DriveTile key={d.name} drive={d} />)}
        </TileGrid>
      </Content>
    </Body>
    <StatusBar>
      <span>22 items</span>
      <span>1 item geselecteerd</span>
      <Views />
    </StatusBar>
  </Window>
);

const FilesWindow = () => (
  <Window $left="13.6%" $top={359} $width="51%">
    <Ribbon
      icon={<SmallFolder />}
      folder={<SmallFolder />}
      tabs={["Start", "Delen", "Beeld"]}
      context="Hulpprogramma's voor schijfkopiebestanden"
      color="#fdcdb5"
      title="W10x64NL"
    />
    <AddressBar
      icon={<SmallFolder w={10} />}
      crumbs={["Deze pc", "T5_SYSTEM (Q:)", "W10x64NL"]}
      search="Zoeken in W10x64NL"
      back
    />
    <Body $height={102}>
      <Tree>
        <Places />
      </Tree>
      <Scrollbar before={30} thumb={19} after={34} />
      <Content>
        <FileTable>
          <colgroup>
            <col width="133" />
            <col width="75" />
            <col width="63" />
            <col />
          </colgroup>
          <thead>
            <tr>
              <th scope="col">
                Naam
                <SortMark><Chevron dir="up" color="#888" w={5} /></SortMark>
              </th>
              <th scope="col">Gewijzigd op</th>
              <th scope="col">Type</th>
              <th scope="col">Grootte</th>
            </tr>
          </thead>
          <tbody>
            {files.map(([name, date, type, size], i) => (
              <FileRow key={name} $selected={i === 1}>
                <td>
                  <FileName>
                    {type === "wim Archive" ? <ArchiveIcon /> : <MiniDriveIcon />}
                    {name}
                  </FileName>
                </td>
                <td>{date}</td>
                <td>{type}</td>
                <td>{size}</td>
              </FileRow>
            ))}
          </tbody>
        </FileTable>
      </Content>
    </Body>
    <StatusBar>
      <span>5 items</span>
      <span>1 item geselecteerd&nbsp; 48,8 GB</span>
      <Views details />
    </StatusBar>
  </Window>
);

const PropertiesDialog = () => (
  <Dialog role="dialog" aria-label="Eigenschappen" $left="65.3%" $top={89} $width="18.8%">
    <DialogTitle>
      <MiniDriveIcon win />
      <h1>Eigenschappen van W10x64NL\W10x64_1909_F.vhd (C:)</h1>
      <IconButton type="button" aria-label="Sluiten"><CloseIcon color="#222" /></IconButton>
    </DialogTitle>
    <TabStrip $columns="60fr 68fr 51fr" $top={3} $inset={1} role="tablist">
      <DialogTab role="tab">Beveiliging</DialogTab>
      <DialogTab role="tab">Vorige versies</DialogTab>
      <DialogTab role="tab">Quotum</DialogTab>
    </TabStrip>
    <TabStrip $columns="51fr 39fr 49fr 42fr" role="tablist">
      <DialogTab role="tab" aria-selected="true" $active>Algemeen</DialogTab>
      <DialogTab role="tab">Extra</DialogTab>
      <DialogTab role="tab">Hardware</DialogTab>
      <DialogTab role="tab">Delen</DialogTab>
    </TabStrip>
    <Sheet>
      <NameRow>
        <DriveIcon kind="win" w={15} />
        <input aria-label="Naam van station" defaultValue="W10x64NL\W10x64_1909_F.vhd" />
      </NameRow>
      <Rule />
      <Facts $columns="37px 1fr" $row={13}>
        <dt>Type:</dt>
        <dd>Lokale schijf</dd>
      </Facts>
      <Facts $columns="53px 1fr" $row={11} $pad="1px 0">
        <dt>Bestandssysteem:</dt>
        <dd>NTFS</dd>
      </Facts>
      <Rule />
      <Facts $columns="10px 44px 1fr 39px" $row={11} $pad="2px 0">
        <Swatch $color="#26a0da" />
        <dt>Gebruikt:</dt>
        <dd className="bytes">19.696.058.368 bytes</dd>
        <dd>18,3 GB</dd>
        <Swatch $color="#a9a9a9" />
        <dt>Beschikbaar:</dt>
        <dd className="bytes">32.730.640.384 bytes</dd>
        <dd>30,4 GB</dd>
      </Facts>
      <Rule />
      <Facts $columns="10px 44px 1fr 39px" $row={13} $pad="1px 0">
        <span />
        <dt>Capaciteit:</dt>
        <dd className="bytes">52.426.698.752 bytes</dd>
        <dd>48,8 GB</dd>
      </Facts>
      <ChartRow>
        <span />
        <Chart>
          <Icon w={30} box="0 0 30 30">
            <circle cx="15" cy="15" r="12" fill="none" stroke="#a9a9a9" strokeWidth="6" />
            <path d="M3 15A12 12 0 0 1 23.500 6.500" fill="none" stroke="#26a0da" strokeWidth="6" />
          </Icon>
          <span>Station C:</span>
        </Chart>
        <PushButton type="button">Schijfopruiming</PushButton>
      </ChartRow>
      <Rule />
      <Options>
        <CheckRow>
          <input type="checkbox" />
          <span>Dit station comprimeren om schijfruimte te besparen</span>
        </CheckRow>
        <CheckRow>
          <input type="checkbox" defaultChecked />
          <span>
            De inhoud en de eigenschappen van bestanden op dit station
            <br />
            mogen worden geïndexeerd
          </span>
        </CheckRow>
      </Options>
    </Sheet>
    <DialogButtons>
      <PushButton type="button" $primary>OK</PushButton>
      <PushButton type="button">Annuleren</PushButton>
      <PushButton type="button" disabled>Toepassen</PushButton>
    </DialogButtons>
  </Dialog>
);

const TaskbarPanel = () => (
  <Taskbar>
    <TaskButton type="button" aria-label="Start" $width={26}><StartIcon /></TaskButton>
    <TaskSearch>
      <SearchIcon w={9} color="#333" />
      <input type="text" placeholder="Typ hier om te zoeken" aria-label="Typ hier om te zoeken" />
    </TaskSearch>
    <TaskButton type="button" aria-label="Taakweergave"><TaskViewIcon /></TaskButton>
    <TaskButton type="button" aria-label="Microsoft Edge">
      <Icon w={12} box="0 0 24 24"><EdgeGlyph color="#0a78d6" /></Icon>
    </TaskButton>
    <TaskButton type="button" aria-label="Verkenner" $active><ExplorerIcon /></TaskButton>
    <TaskButton type="button" aria-label="Mail"><MailIcon /></TaskButton>
    <TaskButton type="button" aria-label="Word" $width={25}><WordIcon /></TaskButton>
    <TaskButton type="button" aria-label="Excel" $width={25}><ExcelIcon /></TaskButton>
    <TaskButton type="button" aria-label="Chrome"><ChromeIcon w={12} /></TaskButton>
    <Tray>
      <TrayIcons>
        {Object.entries(trayIcons).map(([name, art]) => (
          <IconButton type="button" aria-label={name} key={name}><Icon w={10}>{art}</Icon></IconButton>
        ))}
      </TrayIcons>
      <Clock>09:13<br />6-1-2020</Clock>
      <TaskButton type="button" aria-label="Meldingen" $width={22}>
        <Icon w={10}><path d="M1 2h14v10h-3.500v3L8.500 12H1z" fill="none" stroke="#333" strokeWidth="1.300" /></Icon>
      </TaskButton>
    </Tray>
  </Taskbar>
);

const Cursor = () => (
  <path d="M897 99v8.500l2-1.700 1.300 2.900 1.400-.6-1.300-2.900h2.600z" fill="#fff" stroke="#111" strokeWidth=".6" />
);

export default function App() {
  return (
    <Desktop>
      <GlobalStyle />
      <Wallpaper viewBox="0 0 1000 563" preserveAspectRatio="none" aria-hidden="true">
        <defs>
          <linearGradient id="pane" x1="0" x2="1">
            <stop offset="0" stopColor="#2aaefa" stopOpacity=".85" />
            <stop offset="1" stopColor="#1c8cec" stopOpacity=".75" />
          </linearGradient>
        </defs>
        <path d="M560 140L802 178v247L560 400z" fill="#1788ea" opacity=".18" />
        <path
          d="M622 225l78-16v81h-78zM622 294h78v83l-78-15zM703 208l99-21v103h-99zM703 294h99v108l-99-22z"
          fill="url(#pane)"
        />
        <path d="M622.500 294v68l77 15" fill="none" stroke="#3fd0fb" opacity=".6" />
        <Cursor />
      </Wallpaper>
      <DesktopArea>
        <ShortcutColumn>
          {shortcuts.map(([name, Art, linked]) => (
            <DesktopShortcut key={name} name={name} Art={Art} linked={linked} />
          ))}
        </ShortcutColumn>
        <ShortcutColumn $low>
          <DesktopShortcut name="desktop.ini" Art={IniIcon} />
        </ShortcutColumn>
        <ThisPcWindow />
        <FilesWindow />
        <PropertiesDialog />
      </DesktopArea>
      <TaskbarPanel />
    </Desktop>
  );
}
